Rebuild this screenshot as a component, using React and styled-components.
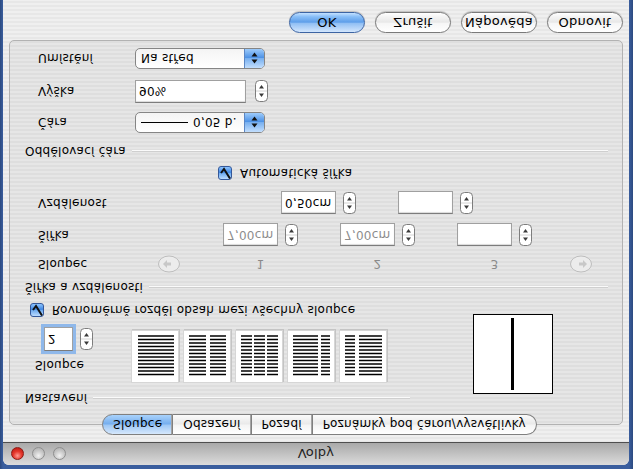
import React from "react";
import styled, { createGlobalStyle } from "styled-components";

const GlobalStyle = createGlobalStyle`
  html, body {
    margin: 0;
    padding: 0;
  }
  body {
    width: 633px;
    height: 469px;
    overflow: hidden;
    background: #35589a;
    font-family: "DejaVu Sans", "Liberation Sans", sans-serif;
    font-size: 12px;
    letter-spacing: 0.25px;
    color: #000;
  }
`;

// the whole screen is shown mirrored top-to-bottom in the shot
const Screen = styled.div`
  width: 633px;
  height: 469px;
  box-sizing: border-box;
  padding: 4px 4px 0 3px;
  background: linear-gradient(90deg, #2c4a80 0px, #3a5e9e 3px, #3a5e9e 629px, #2c4a80 633px);
  transform: scaleY(-1);
  overflow: hidden;
`;

const Window = styled.div`
  width: 626px;
  height: 465px;
  display: flex;
  flex-direction: column;
  border-radius: 6px 6px 0 0;
  overflow: hidden;
  background: repeating-linear-gradient(to bottom, #efefef 0, #efefef 2px, #e7e7e7 2px, #e7e7e7 4px);
`;

const TitleBar = styled.div`
  height: 22px;
  display: grid;
  grid-template-columns: 1fr auto 1fr;
  align-items: center;
  background: linear-gradient(#dcdcdc, #bdbdbd 60%, #a9a9a9);
  border-bottom: 1px solid #4f4f4f;
`;

const Lights = styled.div`
  display: flex;
  gap: 8px;
  padding-left: 8px;
`;

const Light = styled.span`
  width: 13px;
  height: 13px;
  border-radius: 50%;
  box-sizing: border-box;
  border: 1px solid ${(p) => (p.$red ? "#8c1a14" : "#8e8e8e")};
  background: ${(p) =>
    p.$red
      ? "radial-gradient(circle at 50% 30%, #ff9b92 0, #e5372c 45%, #b3140c 100%)"
      : "radial-gradient(circle at 50% 30%, #f2f2f2 0, #c9c9c9 50%, #a8a8a8 100%)"};
`;

const Title = styled.div`
  font-size: 13px;
  color: #1e1e1e;
`;

const Body = styled.div`
  flex: 1;
  display: flex;
  flex-direction: column;
  padding: 7px 6px 0 6px;
`;

const Tabs = styled.div`
  display: flex;
  justify-content: center;
  padding-left: 7px;
  margin-bottom: -11px;
  position: relative;
  z-index: 1;
`;

const Tab = styled.div`
  height: 21px;
  box-sizing: border-box;
  padding: 0 ${(p) => p.$pad}px;
  display: flex;
  align-items: center;
  border: 1px solid #7f7f7f;
  border-left-width: ${(p) => (p.$first ? 1 : 0)}px;
  border-radius: ${(p) => (p.$first ? "11px 0 0 11px" : p.$last ? "0 11px 11px 0" : "0")};
  font-size: 12px;
  background: ${(p) =>
    p.$active
      ? "linear-gradient(#d6e8fc, #9cc6f5 48%, #74adee 52%, #a9d2fb 100%)"
      : "linear-gradient(#ffffff, #f4f4f4 48%, #e9e9e9 52%, #fbfbfb 100%)"};
  box-shadow: inset -1px 0 0 ${(p) => (p.$last ? "transparent" : "#a4a4a4")};
`;

const Panel = styled.div`
  height: 385px;
  box-sizing: border-box;
  border: 1px solid #b2b2b2;
  border-radius: 5px;
  background: rgba(0, 0, 0, 0.035);
  display: flex;
  flex-direction: column;
  padding: 0 14px 0 15px;
`;

const SettingsBlock = styled.div`
  display: flex;
  margin-top: 19px;
`;

const SettingsLeft = styled.div`
  width: 448px;
  display: flex;
  flex-direction: column;
`;

const Header = styled.div`
  display: flex;
  align-items: center;
  gap: 6px;
  height: 14px;
  width: ${(p) => p.$width || "auto"};
  margin-top: ${(p) => p.$top || 0}px;
  &::after {
    content: "";
    flex: 1;
    height: 1px;
    background: #cfcfcf;
    border-bottom: 1px solid #fafafa;
  }
`;

const ColumnsRow = styled.div`
  display: flex;
  margin-top: 8px;
  height: 53px;
`;

const CountBox = styled.div`
  display: flex;
  flex-direction: column;
  margin-left: 10px;
  width: 96px;
  padding-top: 11px;
`;

const CountControl = styled.div`
  display: flex;
  align-items: center;
  margin-top: 7px;
  margin-left: 9px;
  gap: 7px;
`;

const IconRow = styled.div`
  display: flex;
  gap: 4px;
`;

const IconFrame = styled.div`
  width: 48px;
  height: 53px;
  background: #fff;
  border: 1px solid #d6d6d6;
  box-shadow: 1px 1px 0 #c4c4c4;
  box-sizing: border-box;
`;

const Preview = styled.div`
  width: 80px;
  height: 80px;
  margin-top: 11px;
  box-sizing: border-box;
  border: 1px solid #000;
  background: #fff;
  display: flex;
  justify-content: center;
`;

const Divider = styled.div`
  width: 3px;
  background: #000;
  border-top: 3px solid #fff;
  border-bottom: 3px solid #fff;
  box-sizing: border-box;
  margin-right: 2px;
`;

const CheckRow = styled.label`
  display: flex;
  align-items: center;
  gap: 8px;
  height: 14px;
  margin-top: ${(p) => p.$top}px;
  margin-left: ${(p) => p.$left}px;
`;

const Check = styled.span`
  width: 14px;
  height: 14px;
  box-sizing: border-box;
  border: 1px solid #34589a;
  border-radius: 3px;
  background: linear-gradient(#bcdcff, #6aa8ee 50%, #3f86e2 55%, #8cc4ff);
  display: flex;
  align-items: center;
  justify-content: center;
`;

const GridRow = styled.div`
  display: grid;
  grid-template-columns: 120px 65px 117px 117px 117px 1fr;
  align-items: center;
  margin-left: 13px;
  height: ${(p) => p.$h}px;
  margin-top: ${(p) => p.$top}px;
`;

const Num = styled.div`
  width: 75px;
  text-align: center;
  color: #8a8a8a;
`;

const Group = styled.div`
  display: flex;
  align-items: center;
  gap: 7px;
  justify-self: start;
  min-width: max-content;
  margin-left: ${(p) => p.$offset || 0}px;
  & > * {
    flex-shrink: 0;
  }
`;

const Field = styled.div`
  width: ${(p) => p.$w}px;
  height: ${(p) => p.$h || 23}px;
  flex-shrink: 0;
  box-sizing: border-box;
  border: 1px solid #a0a0a0;
  border-top-color: #7c7c7c;
  background: #fff;
  padding-left: 3px;
  display: flex;
  align-items: center;
  color: ${(p) => (p.$dim ? "#8c8c8c" : "#000")};
  box-shadow: ${(p) => (p.$focus ? "0 0 0 3px #8fb8ea" : "inset 0 1px 1px rgba(0,0,0,0.15)")};
`;

const FormRow = styled.div`
  display: flex;
  align-items: center;
  margin-left: 13px;
  height: ${(p) => p.$h}px;
  margin-top: ${(p) => p.$top}px;
`;

const Label = styled.div`
  width: 97px;
`;

const Popup = styled.div`
  width: 130px;
  height: 21px;
  box-sizing: border-box;
  border: 1px solid #858585;
  border-radius: 5px;
  background: linear-gradient(#ffffff, #f4f4f4);
  display: flex;
  overflow: hidden;
`;

const PopupText = styled.div`
  flex: 1;
  display: flex;
  align-items: center;
  padding-left: 5px;
  gap: 5px;
  white-space: nowrap;
`;

const PopupArrows = styled.div`
  width: 19px;
  border-left: 1px solid #5b86c4;
  background: linear-gradient(#c2defd, #78b0f0 50%, #4f93e6 55%, #9dcbfb);
  display: flex;
  align-items: center;
  justify-content: center;
`;

const LineSample = styled.span`
  width: 47px;
  height: 1px;
  background: #000;
`;

const StepGap = styled.span`
  width: 9px;
`;

const Buttons = styled.div`
  display: flex;
  justify-content: flex-end;
  gap: 10px;
  margin-top: 7px;
`;

const Button = styled.div`
  width: 76px;
  height: 21px;
  box-sizing: border-box;
  border-radius: 11px;
  border: 1px solid ${(p) => (p.$default ? "#3c64a3" : "#7a7a7a")};
  display: flex;
  align-items: center;
  justify-content: center;
  font-size: 13px;
  background: ${(p) =>
    p.$default
      ? "linear-gradient(#d3e6fd, #92c0f4 45%, #5e9ee9 52%, #86bdf7 80%, #c3e1ff)"
      : "linear-gradient(#ffffff, #f6f6f6 45%, #e8e8e8 52%, #f4f4f4 80%, #ffffff)"};
  box-shadow: 0 1px 1px rgba(0, 0, 0, 0.2);
`;

function Stepper() {
  return (
    <svg width="13" height="22" viewBox="0 0 13 22" style={{ flexShrink: 0 }}>
      <rect x="0.5" y="0.5" width="12" height="21" rx="4" fill="#fff" stroke="#7d7d7d" />
      <line x1="1" y1="11" x2="12" y2="11" stroke="#d4d4d4" />
      <path d="M6.5 5 L9 8.5 H4 Z" fill="#3a3a3a" />
      <path d="M6.5 17 L9 13.5 H4 Z" fill="#3a3a3a" />
    </svg>
  );
}

function PopArrows() {
  return (
    <svg width="7" height="12" viewBox="0 0 7 12">
      <path d="M3.5 0.5 L6.5 4.5 H0.5 Z" fill="#111" />
      <path d="M3.5 11.5 L6.5 7.5 H0.5 Z" fill="#111" />
    </svg>
  );
}

function CheckMark() {
  return (
    <svg width="12" height="12" viewBox="0 0 12 12">
      <path d="M2 6 L5 10 L11 0.5" fill="none" stroke="#111" strokeWidth="2" />
    </svg>
  );
}

function RoundArrow({ dir }) {
  const d = dir === "left" ? "M5 9 L9 5 V7.5 H13 V10.5 H9 V13 Z" : "M17 9 L13 5 V7.5 H9 V10.5 H13 V13 Z";
  return (
    <svg width="22" height="18" viewBox="0 0 22 18">
      <ellipse cx="11" cy="9" rx="10.5" ry="8" fill="#ececec" stroke="#bdbdbd" />
      <path d={d} fill="#c8c8c8" />
    </svg>
  );
}

const layouts = [
  [[6, 42]],
  [[5, 22], [26, 42]],
  [[5, 16], [18, 29], [31, 42]],
  [[5, 30], [33, 42]],
  [[5, 15], [19, 42]],
];

function ColumnIcon({ cols }) {
  const ys = Array.from({ length: 12 }, (_, i) => 7.5 + i * 3.5);
  return (
    <IconFrame>
      <svg width="46" height="51" viewBox="0 0 46 51">
        {cols.map(([a, b]) =>
          ys.map((y) => <line key={a + "-" + y} x1={a} x2={b} y1={y} y2={y} stroke="#000" strokeWidth="1.5" />)
        )}
      </svg>
    </IconFrame>
  );
}

export default function App() {
  return (
    <>
      <GlobalStyle />
      <Screen>
        <Window>
          <TitleBar>
            <Lights>
              <Light $red />
              <Light />
              <Light />
            </Lights>
            <Title>Volby</Title>
            <div />
          </TitleBar>
          <Body>
            <Tabs>
              <Tab $first $active $pad={10}>Sloupce</Tab>
              <Tab $pad={10}>Odsazení</Tab>
              <Tab $pad={10}>Pozadí</Tab>
              <Tab $last $pad={10}>Poznámky pod čarou/vysvětlivky</Tab>
            </Tabs>
            <Panel>
              <SettingsBlock>
                <SettingsLeft>
                  <Header $width="385px">Nastavení</Header>
                  <ColumnsRow>
                    <CountBox>
                      <span>Sloupce</span>
                      <CountControl>
                        <Field $w={29} $h={24} $focus>2</Field>
                        <Stepper />
                      </CountControl>
                    </CountBox>
                    <IconRow>
                      {layouts.map((c, i) => (
                        <ColumnIcon key={i} cols={c} />
                      ))}
                    </IconRow>
                  </ColumnsRow>
                  <CheckRow $top={13} $left={5}>
                    <Check>
                      <CheckMark />
                    </Check>
                    Rovnoměrně rozděl obsah mezi všechny sloupce
                  </CheckRow>
                </SettingsLeft>
                <Preview>
                  <Divider />
                </Preview>
              </SettingsBlock>

              <Header $top={9}>Šířka a vzdálenosti</Header>
              <GridRow $h={16} $top={7}>
                <span>Sloupec</span>
                <RoundArrow dir="left" />
                <Num>1</Num>
                <Num>2</Num>
                <Num>3</Num>
                <Group $offset={-4}>
                  <RoundArrow dir="right" />
                </Group>
              </GridRow>
              <GridRow $h={24} $top={10}>
                <span>Šířka</span>
                <span />
                <Group>
                  <Field $w={55} $dim>7,00cm</Field>
                  <Stepper />
                </Group>
                <Group>
                  <Field $w={55} $dim>7,00cm</Field>
                  <Stepper />
                </Group>
                <Group>
                  <Field $w={55} />
                  <Stepper />
                </Group>
              </GridRow>
              <GridRow $h={24} $top={8}>
                <span>Vzdálenost</span>
                <span />
                <Group $offset={58}>
                  <Field $w={55}>0,50cm</Field>
                  <Stepper />
                </Group>
                <Group $offset={58}>
                  <Field $w={55} />
                  <Stepper />
                </Group>
              </GridRow>
              <CheckRow $top={11} $left={193}>
                <Check>
                  <CheckMark />
                </Check>
                Automatická šířka
              </CheckRow>

              <Header $top={8}>Oddělovací čára</Header>
              <FormRow $h={21} $top={11}>
                <Label>Čára</Label>
                <Popup>
                  <PopupText>
                    <LineSample />
                    0,05 b.
                  </PopupText>
                  <PopupArrows>
                    <PopArrows />
                  </PopupArrows>
                </Popup>
              </FormRow>
              <FormRow $h={23} $top={9}>
                <Label>Výška</Label>
                <Field $w={111}>90%</Field>
                <StepGap />
                <Stepper />
              </FormRow>
              <FormRow $h={21} $top={11}>
                <Label>Umístění</Label>
                <Popup>
                  <PopupText>Na střed</PopupText>
                  <PopupArrows>
                    <PopArrows />
                  </PopupArrows>
                </Popup>
              </FormRow>
            </Panel>
            <Buttons>
              <Button $default>OK</Button>
              <Button>Zrušit</Button>
              <Button>Nápověda</Button>
              <Button>Obnovit</Button>
            </Buttons>
          </Body>
        </Window>
      </Screen>
    </>
  );
}
